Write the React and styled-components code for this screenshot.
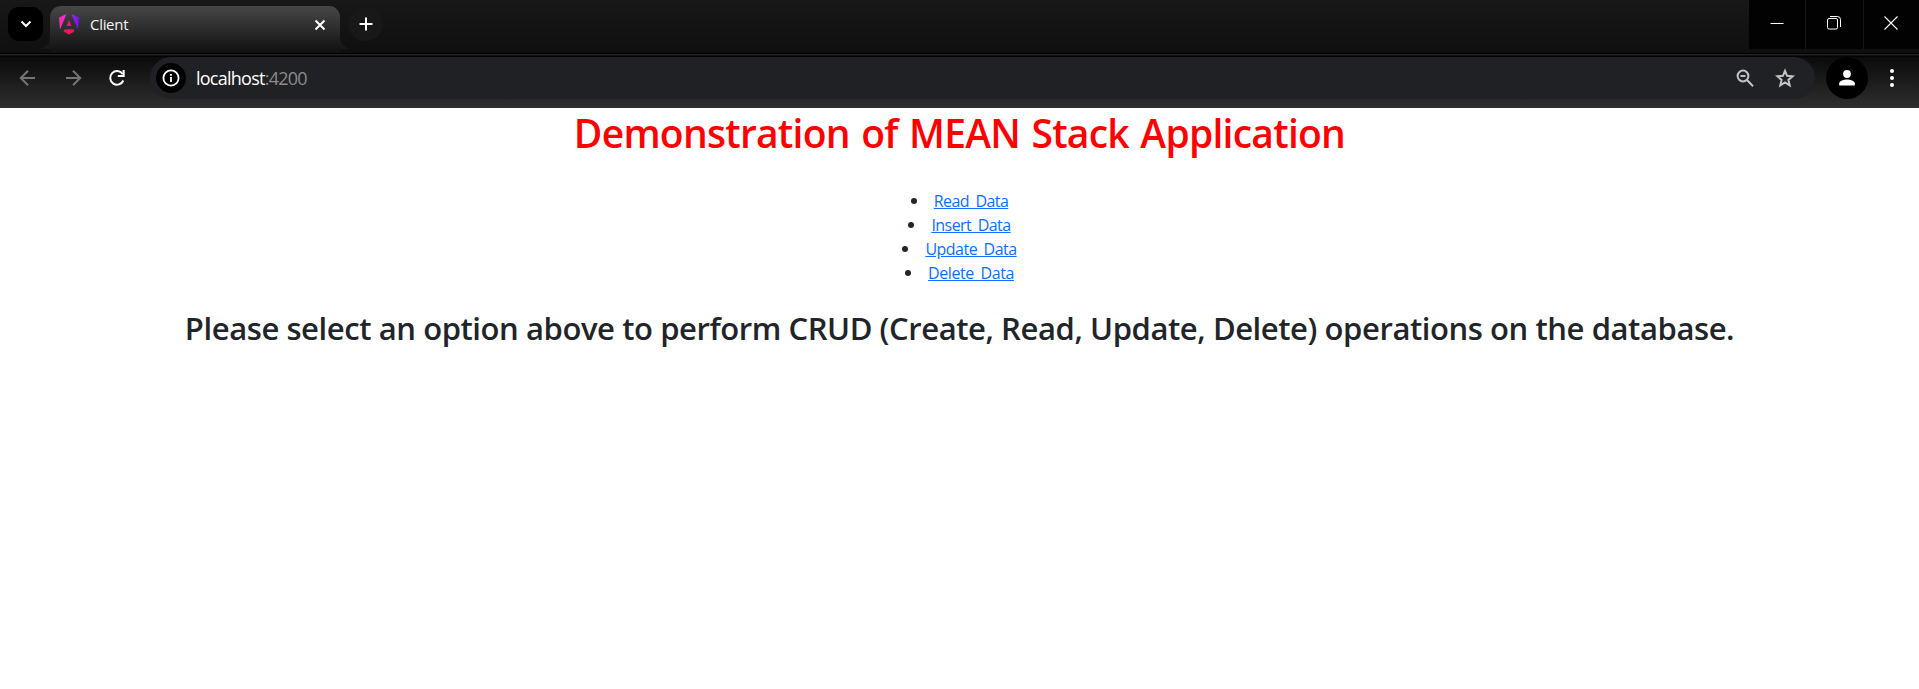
import React from "react";
import styled, { createGlobalStyle } from "styled-components";

const Global = createGlobalStyle`
  * { box-sizing: border-box; }
  body { margin: 0; background: #fff; color: #212529; font-family: "Open Sans", "Noto Sans", sans-serif; overflow: hidden; }
`;

const Window = styled.div`
  height: 689px;
  display: flex;
  flex-direction: column;
`;

const TabStrip = styled.header`
  height: 53px;
  flex: none;
  display: flex;
  align-items: flex-start;
  padding-left: 8px;
  background: linear-gradient(#181818, #0f0f0f);
`;

const Seam = styled.div`
  height: 4px;
  flex: none;
  background: linear-gradient(#000 0 1px, #242424 1px 2px, #101010 2px 3px, #030303 3px 4px);
`;

const StripButton = styled.button`
  width: 35px;
  height: 34px;
  margin: 7px 0 0;
  padding: 0;
  border: 0;
  border-radius: ${(p) => (p.$round ? "50%" : "11px")};
  background: ${(p) => (p.$round ? "#181818" : "#000")};
  display: grid;
  place-items: center;
`;

const Tab = styled.div`
  position: relative;
  width: 290px;
  height: 47px;
  margin: 6px 8px 0 7px;
  padding: 0 13px 10px 9px;
  border-radius: 11px 11px 0 0;
  background: linear-gradient(#474747, #101010);
  display: flex;
  align-items: center;

  &::before,
  &::after {
    content: "";
    position: absolute;
    bottom: 4px;
    width: 11px;
    height: 11px;
  }
  &::before {
    right: 100%;
    background: radial-gradient(circle at 0 0, transparent 10px, #191919 11px);
  }
  &::after {
    left: 100%;
    background: radial-gradient(circle at 100% 0, transparent 10px, #191919 11px);
  }
`;

const TabTitle = styled.span`
  flex: 1;
  margin-left: 11px;
  padding-bottom: 1px;
  color: #f4f4f4;
  font-size: 15px;
  line-height: 20px;
  letter-spacing: -0.3px;
`;

const WindowControls = styled.div`
  height: 49px;
  margin-left: auto;
  display: grid;
  grid-template-columns: 56px 57px 55px;
  column-gap: 1px;
  background: #151515;
`;

const WindowButton = styled.div`
  background: #020202;
  display: grid;
  place-items: center;
  padding: 0 ${(p) => p.$inset || 0}px 3px 0;
`;

const Toolbar = styled.nav`
  height: 51px;
  flex: none;
  display: flex;
  align-items: flex-start;
  padding-right: 21px;
  background: linear-gradient(#0a0a0a, #2f2f2f);
`;

const NavButtons = styled.div`
  height: 42px;
  width: 150px;
  padding-left: 19px;
  display: flex;
  align-items: center;
  gap: 26.5px;
`;

const AddressBar = styled.div`
  flex: 1;
  height: 42px;
  padding: 0 20px 0 6px;
  border-radius: 21px;
  background: #202124;
  display: flex;
  align-items: center;
`;

const Disc = styled.span`
  width: ${(p) => p.$size}px;
  height: ${(p) => p.$size}px;
  border-radius: 50%;
  background: #000;
  display: grid;
  place-items: center;
`;

const Url = styled.span`
  flex: 1;
  margin-left: 10px;
  padding-bottom: 1px;
  color: #fff;
  font-size: 18px;
  line-height: 24px;
  letter-spacing: -0.75px;
`;

const Port = styled.span`
  color: #8b8b8b;
`;

const AddressActions = styled.div`
  display: flex;
  align-items: center;
  gap: 20px;
`;

const Account = styled.div`
  margin: 0 18px 0 11px;
`;

const MenuSlot = styled.div`
  height: 42px;
  display: grid;
  place-items: center;
`;

const Page = styled.main`
  flex: 1;
  background: #fff;
  text-align: center;
  white-space: nowrap;
`;

const Title = styled.h1`
  margin: 0;
  font-size: 39px;
  line-height: 50px;
  font-weight: 600;
  letter-spacing: -0.74px;
  word-spacing: 2px;
  color: #f00;
`;

const Links = styled.ul`
  margin: 31px 0 0;
  padding: 0;
  list-style: none;
`;

const LinkRow = styled.li`
  height: 24px;
  display: flex;
  align-items: center;
  justify-content: center;
  gap: 17px;
  &::before {
    content: "";
    width: 6px;
    height: 6px;
    border-radius: 50%;
    background: #212529;
  }
`;

const Link = styled.a`
  color: #0d6efd;
  font-size: 16px;
  line-height: 24px;
  letter-spacing: ${(p) => p.$track}px;
  text-decoration: underline;
`;

const Prompt = styled.h2`
  margin: 23px 0 0;
  font-size: 31px;
  line-height: 40px;
  font-weight: 600;
  letter-spacing: -0.42px;
`;

const AngularLogo = () => (
  <svg width="20" height="21" viewBox="0 0 20 21">
    <defs>
      <linearGradient id="shield" gradientUnits="userSpaceOnUse" x1="0" y1="6" x2="20" y2="8">
        <stop offset="0" stopColor="#ff2cb4" />
        <stop offset="0.4" stopColor="#f02cd0" />
        <stop offset="0.65" stopColor="#a020f0" />
        <stop offset="1" stopColor="#6d12f5" />
      </linearGradient>
      <linearGradient id="base" x1="0" y1="0" x2="0" y2="1">
        <stop offset="0" stopColor="#e514a5" />
        <stop offset="1" stopColor="#ff1040" />
      </linearGradient>
    </defs>
    <path fill="url(#shield)" d="M0 3.4 7.5 0 1 15.5ZM12.5 0 20 3.4 19 15.5Z" />
    <path fill="url(#base)" d="M10 6l2.5 6h-5ZM5.6 15.2h8.8l1 2.3L10 20.6l-5.4-3.1Z" />
  </svg>
);

const Stroke = ({ size, color = "#fff", width = 2, d }) => (
  <svg width={size} height={size} viewBox={`0 0 ${size} ${size}`} fill="none" stroke={color} strokeWidth={width}>
    <path d={d} />
  </svg>
);

const links = [
  ["Read_Data", -0.58],
  ["Insert_Data", -0.55],
  ["Update_Data", -0.52],
  ["Delete_Data", -0.42],
];

export default function App() {
  return (
    <Window>
      <Global />
      <TabStrip>
        <StripButton aria-label="Search tabs"><Stroke size={12} d="M1.5 3.5 6 8l4.5-4.5" /></StripButton>
        <Tab>
          <AngularLogo />
          <TabTitle>Client</TabTitle>
          <Stroke size={14} d="M2.5 2.5l9 9M11.5 2.5l-9 9" />
        </Tab>
        <StripButton $round aria-label="New tab"><Stroke size={14} d="M7 .5v13M.5 7h13" /></StripButton>
        <WindowControls>
          <WindowButton><Stroke size={14} width={1} d="M.5 7.5h13" /></WindowButton>
          <WindowButton $inset={1}>
            <svg width="14" height="14" fill="none" stroke="#fff">
              <rect x=".5" y="2.5" width="10" height="10.5" rx="1.5" />
              <path d="M3 .5h7.5a3 3 0 0 1 3 3V11" />
            </svg>
          </WindowButton>
          <WindowButton $inset={1}><Stroke size={14} width={1.1} d="M.5.5l13 13M13.5.5l-13 13" /></WindowButton>
        </WindowControls>
      </TabStrip>
      <Seam />
      <Toolbar>
        <NavButtons>
          <Stroke size={18} color="#757575" d="M16 9H2.5M9 1.8 1.8 9 9 16.2" />
          <Stroke size={18} color="#757575" d="M2 9h13.5M9 1.8 16.2 9 9 16.2" />
          <svg width="18" height="18" viewBox="0 0 18 18" fill="none" stroke="#fff" strokeWidth="2">
            <path d="M15.3 11.5A6.8 6.8 0 1 1 14.6 5" />
            <path fill="#fff" stroke="none" d="M16.7 1v7H9.8V6h4.8V1Z" />
          </svg>
        </NavButtons>
        <AddressBar>
          <Disc $size={30}>
            <svg width="18" height="18" fill="none" stroke="#fff" strokeWidth="1.8">
              <circle cx="9" cy="9" r="7.6" />
              <path d="M9 8v5M9 5v1.8" />
            </svg>
          </Disc>
          <Url>localhost<Port>:4200</Port></Url>
          <AddressActions>
            <svg width="20" height="20" fill="none" stroke="#c4c4c4" strokeWidth="2">
              <circle cx="8" cy="8" r="5.4" />
              <path d="M12 12l6 6.2M5.5 8h5" />
            </svg>
            <svg width="20" height="20" viewBox="0 0 20 20" fill="none" stroke="#c4c4c4" strokeWidth="2">
              <path d="M10 2.8l2.1 5 5.5.5-4.2 3.6 1.3 5.4L10 14.4l-4.7 2.9 1.3-5.4-4.2-3.6 5.5-.5Z" />
            </svg>
          </AddressActions>
        </AddressBar>
        <Account>
          <Disc $size={42}>
            <svg width="16" height="16" fill="#fff">
              <circle cx="8" cy="4" r="3.9" />
              <path d="M.2 15.5v-2.2C.2 10.6 5 9.4 8 9.4s7.8 1.2 7.8 3.9v2.2Z" />
            </svg>
          </Disc>
        </Account>
        <MenuSlot>
          <svg width="12" height="20" fill="#fff">
            <circle cx="6" cy="3" r="2" />
            <circle cx="6" cy="10" r="2" />
            <circle cx="6" cy="17" r="2" />
          </svg>
        </MenuSlot>
      </Toolbar>
      <Page>
        <Title>Demonstration of MEAN Stack Application</Title>
        <Links>
          {links.map(([label, track]) => (
            <LinkRow key={label}><Link href="#" $track={track}>{label}</Link></LinkRow>
          ))}
        </Links>
        <Prompt>Please select an option above to perform CRUD (Create, Read, Update, Delete) operations on the database.</Prompt>
      </Page>
    </Window>
  );
}
